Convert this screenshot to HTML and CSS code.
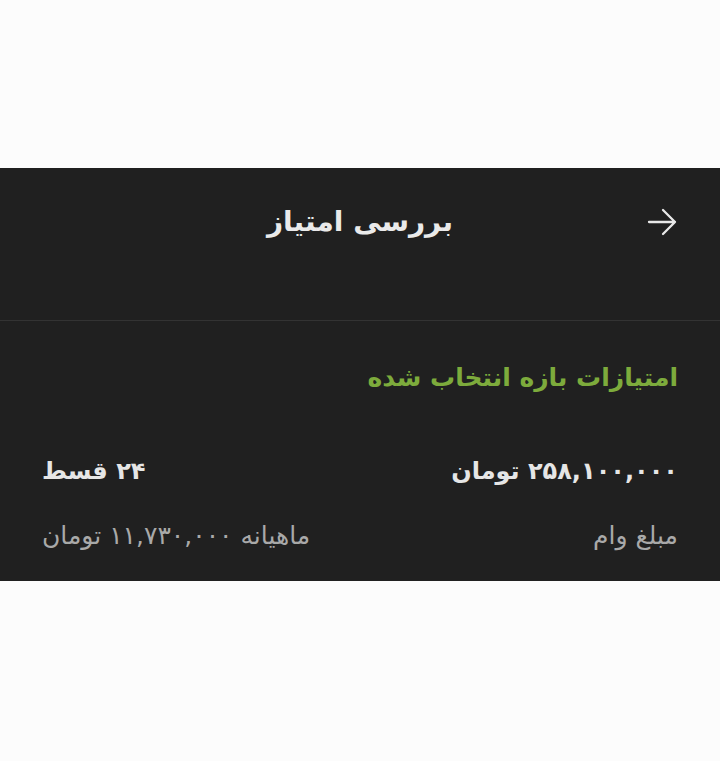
FILE: index.html
```html
<!DOCTYPE html>
<html lang="fa" dir="rtl">
<head>
<meta charset="utf-8">
<link rel="stylesheet" href="styles.css">
</head>
<body>
<div class="page">
  <div class="panel">
    <div class="header">
      <span class="back">
        <svg width="32" height="30" viewBox="0 0 32 30" fill="none" stroke="#e8e8e8" stroke-width="2.3" stroke-linecap="round" stroke-linejoin="round">
          <path d="M3 15 H29 M17 3 L29 15 L17 27"/>
        </svg>
      </span>
      <h1 class="title">بررسی امتیاز</h1>
    </div>
    <div class="divider"></div>
    <div class="body">
      <div class="section-title">امتیازات بازه انتخاب شده</div>
      <div class="row row-main">
        <span>۲۵۸,۱۰۰,۰۰۰ تومان</span>
        <span>۲۴ قسط</span>
      </div>
      <div class="row row-sub">
        <span>مبلغ وام</span>
        <span>ماهیانه ۱۱,۷۳۰,۰۰۰ تومان</span>
      </div>
    </div>
  </div>
</div>
</body>
</html>
```
FILE: styles.css
```css
html, body {
  margin: 0;
  padding: 0;
  background: #fcfcfc;
}
body {
  font-family: "DejaVu Sans", sans-serif;
  width: 720px;
  height: 761px;
}
.page {
  padding-top: 168px;
}
.panel {
  background: #202020;
  height: 413px;
  box-sizing: border-box;
}
.header {
  position: relative;
  height: 106px;
  display: flex;
  align-items: center;
  justify-content: center;
  margin-bottom: 46px;
}
.back {
  position: absolute;
  right: 42px;
  top: 39px;
  display: flex;
}
.title {
  margin: 0;
  font-size: 28px;
  font-weight: bold;
  color: #eaeaea;
}
.divider {
  height: 1px;
  background: #333;
}
.body {
  padding: 37px 42px 0;
}
.section-title {
  color: #7dab3c;
  font-size: 25px;
  font-weight: bold;
  line-height: 40px;
}
.row {
  display: flex;
  justify-content: space-between;
  align-items: center;
}
.row-main {
  margin-top: 53px;
  color: #e6e6e6;
  font-size: 24px;
  font-weight: bold;
  line-height: 40px;
}
.row-sub {
  margin-top: 25px;
  color: #a9a9a9;
  font-size: 25px;
  line-height: 40px;
}
```
